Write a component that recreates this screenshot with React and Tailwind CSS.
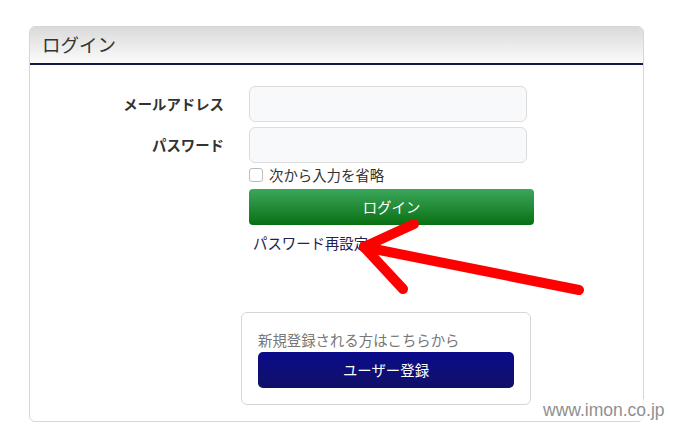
import React from "react";

const jp = { fontFamily: '"Noto Sans CJK JP", "Noto Sans", sans-serif' };

const Arrow = () => (
    <svg className="absolute left-0 top-0 pointer-events-none" width="673" height="439">
        <g stroke="#ff0000" strokeWidth="10" strokeLinecap="round" strokeLinejoin="round" fill="none">
            <line x1="579" y1="290" x2="364" y2="247" />
            <line x1="364" y1="247" x2="414" y2="224" />
            <line x1="364" y1="247" x2="403" y2="289" />
        </g>
    </svg>
);

const Field = ({label}) => (
    <div className="flex items-center">
        <div className="w-[194px] text-right font-bold text-[14.4px] text-[#333]">{label}</div>
        <div className="ml-[25px] w-[278px] h-[36px] rounded-[6px] border border-[#dcdcdc] bg-[#f8f9fb]"></div>
    </div>
);

const App = () => {
    return (
        <div className="relative w-[673px] h-[439px] bg-white overflow-hidden" style={jp}>
            <div className="ml-[29px] mt-[26px] w-[615px] h-[396px] border border-[#d6d6d6] rounded-[6px] overflow-hidden">
                <div className="h-[38px] bg-gradient-to-b from-[#dadada] to-[#fbfbfb] border-b-2 border-[#141a48] flex items-center pl-[12px]">
                    <span className="text-[18.5px] text-[#333]">ログイン</span>
                </div>
                <div className="pt-[21px] flex flex-col gap-[5px]">
                    <Field label="メールアドレス" />
                    <Field label="パスワード" />
                </div>
                <div className="ml-[219px] mt-[4px] flex items-center h-[16px]">
                    <div className="w-[14px] h-[14px] rounded-[3px] border border-[#bbb] bg-white"></div>
                    <span className="ml-[6px] text-[14.4px] text-[#333]">次から入力を省略</span>
                </div>
                <div className="ml-[219px] mt-[6px] w-[285px] h-[36px] rounded-[4px] bg-gradient-to-b from-[#3aa75a] to-[#06700f] flex items-center justify-center">
                    <span className="text-[14.4px] text-white">ログイン</span>
                </div>
                <div className="ml-[223px] mt-[8px] text-[14.4px] text-[#22224e] leading-[20px]">パスワード再設定</div>
                <div className="ml-[211px] mt-[59px] w-[290px] h-[93px] border border-[#d6d6d6] rounded-[6px] px-[16px] pt-[17px]">
                    <div className="text-[14.4px] text-[#777] leading-[20px]">新規登録される方はこちらから</div>
                    <div className="mt-[2px] h-[36px] rounded-[5px] bg-gradient-to-b from-[#0a0a8c] to-[#101066] flex items-center justify-center">
                        <span className="text-[14.4px] text-white">ユーザー登録</span>
                    </div>
                </div>
            </div>
            <Arrow />
            <div className="absolute left-[543px] top-[399px] text-[17.5px] text-[#909090] bg-white/70 leading-[22px]" style={{fontFamily: '"Liberation Sans", sans-serif'}}>www.imon.co.jp</div>
        </div>
    );
};

export default App;
